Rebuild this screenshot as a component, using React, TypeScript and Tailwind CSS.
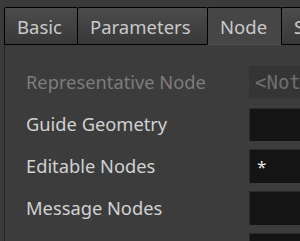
import React from "react";

const font = { fontFamily: '"Noto Sans", "Open Sans", sans-serif' };

function Tab({ label, active, w }: { label: string; active?: boolean; w: string }) {
  return (
    <div
      className={
        "h-[38px] shrink-0 flex items-center pl-[12px] pt-[2px] border border-black rounded-t-[2px] -ml-px text-[18.5px] text-[#c9c9c9] " +
        w +
        (active
          ? " bg-[#464646] border-b-[#505050]"
          : " bg-gradient-to-b from-[#4c4c4c] to-[#383838]")
      }
    >
      {label}
    </div>
  );
}

function Row({ label, dim, children }: { label: string; dim?: boolean; children: React.ReactNode }) {
  return (
    <div className="h-[42px] flex items-center">
      <div className={"w-[244px] shrink-0 pl-[21px] text-[18.3px] " + (dim ? "text-[#7d7d7d]" : "text-[#d2d2d2]")}>{label}</div>
      {children}
    </div>
  );
}

export default function App() {
  return (
    <div className="w-[300px] h-[241px] bg-[#3a3a3a] overflow-hidden" style={font}>
      <div className="pt-[7px] pl-[5px] flex">
        <Tab label="Basic" w="w-[74px]" />
        <Tab label="Parameters" w="w-[131px]" />
        <Tab label="Node" active w="w-[75px]" />
        <Tab label="Script" w="w-[80px]" />
      </div>
      <div className="ml-[4px] border-l border-[#262626] bg-[#3c3c3c] h-[200px] pt-[16px]">
        <Row label="Representative Node" dim>
          <div className="w-[60px] shrink-0 h-[33px] bg-[#353535] flex items-center pl-[6px] text-[#6f6f6f] text-[19px]" style={{ fontFamily: '"DejaVu Sans Mono", monospace' }}>
            &lt;Not
          </div>
        </Row>
        <Row label="Guide Geometry">
          <div className="w-[60px] shrink-0 h-[33px] bg-[#141414] border-t border-l border-[#2a2a2a]" />
        </Row>
        <Row label="Editable Nodes">
          <div className="w-[60px] shrink-0 h-[34px] bg-[#141414] border-t border-l border-[#2a2a2a] flex items-center pl-[7px] text-[#e8e8e8] text-[17px]">
            *
          </div>
        </Row>
        <Row label="Message Nodes">
          <div className="w-[60px] shrink-0 h-[34px] bg-[#141414] border-t border-l border-[#2a2a2a]" />
        </Row>
        <Row label="">
          <div className="w-[60px] shrink-0 h-[34px] bg-[#141414] border-t border-l border-[#2a2a2a]" />
        </Row>
      </div>
    </div>
  );
}
